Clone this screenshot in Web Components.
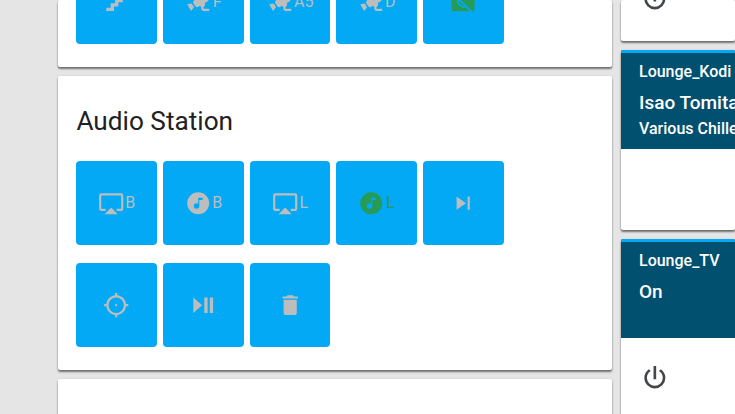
<!doctype html>
<html><head><meta charset="utf-8">
<style>
html,body{margin:0;height:414px;overflow:hidden;background:#e5e5e5;font-family:Roboto,sans-serif}
</style></head><body>
<dash-board>
  <dash-column slot="left">
    <dash-card style="height:67px" align="end">
      <action-row>
        <action-btn icon="stairs"></action-btn>
        <action-btn icon="cctv" label="F"></action-btn>
        <action-btn icon="cctv" label="A5"></action-btn>
        <action-btn icon="cctv" label="D"></action-btn>
        <action-btn icon="videooff" on></action-btn>
      </action-row>
    </dash-card>
    <dash-card heading="Audio Station" style="height:294px">
      <action-row>
        <action-btn icon="airplay" label="B"></action-btn>
        <action-btn icon="music" label="B"></action-btn>
        <action-btn icon="airplay" label="L"></action-btn>
        <action-btn icon="music" label="L" on></action-btn>
        <action-btn icon="next"></action-btn>
      </action-row>
      <action-row>
        <action-btn icon="crosshair"></action-btn>
        <action-btn icon="playpause"></action-btn>
        <action-btn icon="trash"></action-btn>
      </action-row>
    </dash-card>
    <dash-card style="height:60px"></dash-card>
  </dash-column>
  <dash-column slot="right">
    <media-card style="height:41px" bare icon="ring"></media-card>
    <media-card style="height:180px" name="Lounge_Kodi" title="Isao Tomita" sub="Various Chillers"></media-card>
    <media-card style="height:200px" name="Lounge_TV" title="On" icon="power"></media-card>
  </dash-column>
</dash-board>
<script>
const P={
stairs:'M15,5V9H11V13H7V17H3V20H10V16H14V12H18V8H22V5H15Z',
cctv:'M18.15,4.94C17.77,4.91 17.37,5 17,5.2L8.35,10.2C7.39,10.76 7.07,12 7.62,12.94L9.12,15.53C9.67,16.5 10.89,16.82 11.85,16.27L13.65,15.23C13.92,15.69 14.32,16.06 14.81,16.27V18.04C14.81,19.13 15.7,20 16.81,20H22V18.04H16.81V16.27C17.72,15.87 18.31,14.97 18.31,14C18.31,13.54 18.19,13.11 17.97,12.73L20.5,11.27C21.47,10.71 21.8,9.5 21.24,8.53L19.74,5.94C19.4,5.34 18.79,5 18.15,4.94M6.22,13.17L2,13.87L2.75,15.17L4.75,18.63L5.5,19.93L8.22,16.63L6.22,13.17Z',
videooff:'M3.5,0H21A1.5,1.5 0 0,1 22.3,1.5V18.5A1.7,1.7 0 0,1 20.6,20.2H3.2A1.7,1.7 0 0,1 1.5,18.5V1.5Z',
airplay:'M6,22H18L12,16M21,3H3A2,2 0 0,0 1,5V17A2,2 0 0,0 3,19H7V17H3V5H21V17H17V19H21A2,2 0 0,0 23,17V5A2,2 0 0,0 21,3Z',
music:'M16,9V7H12V12.5C11.58,12.19 11.07,12 10.5,12A2.5,2.5 0 0,0 8,14.5A2.5,2.5 0 0,0 10.5,17A2.5,2.5 0 0,0 13,14.5V9H16M12,2A10,10 0 0,1 22,12A10,10 0 0,1 12,22A10,10 0 0,1 2,12A10,10 0 0,1 12,2Z',
next:'M16,18H18V6H16M6,18L14.5,12L6,6V18Z',
crosshair:'M3.05,13H1V11H3.05C3.5,6.83 6.83,3.5 11,3.05V1H13V3.05C17.17,3.5 20.5,6.83 20.95,11H23V13H20.95C20.5,17.17 17.17,20.5 13,20.95V23H11V20.95C6.83,20.5 3.5,17.17 3.05,13M12,5A7,7 0 0,0 5,12A7,7 0 0,0 12,19A7,7 0 0,0 19,12A7,7 0 0,0 12,5ZM12,11A1,1 0 0,1 13,12A1,1 0 0,1 12,13A1,1 0 0,1 11,12A1,1 0 0,1 12,11Z',
playpause:'M3,5V19L11,12M13,19H16V5H13M18,5V19H21V5',
trash:'M19,4H15.5L14.5,3H9.5L8.5,4H5V6H19M6,19A2,2 0 0,0 8,21H16A2,2 0 0,0 18,19V7H6V19Z',
power:'M16.56,5.44L15.11,6.89C16.84,7.94 18,9.83 18,12A6,6 0 0,1 12,18A6,6 0 0,1 6,12C6,9.83 7.16,7.94 8.88,6.88L7.44,5.44C5.36,6.88 4,9.28 4,12A8,8 0 0,0 12,20A8,8 0 0,0 20,12C20,9.28 18.64,6.88 16.56,5.44M13,3H11V13H13',
ring:'M12,4A8,8 0 0,1 20,12A8,8 0 0,1 12,20A8,8 0 0,1 4,12A8,8 0 0,1 12,4M12,6A6,6 0 0,0 6,12A6,6 0 0,0 12,18A6,6 0 0,0 18,12A6,6 0 0,0 12,6M11,6H13V14H11Z'
};
customElements.define('dash-board',class extends HTMLElement{constructor(){super();this.attachShadow({mode:'open'}).innerHTML=`<style>
:host{display:flex;height:414px;overflow:hidden;padding-left:58px;gap:9px;box-sizing:border-box}
::slotted([slot=left]){width:554px;flex:none}
::slotted([slot=right]){flex:1;min-width:0}
</style><slot name="left"></slot><slot name="right"></slot>`}});
customElements.define('dash-column',class extends HTMLElement{constructor(){super();this.attachShadow({mode:'open'}).innerHTML=`<style>
:host{display:flex;flex-direction:column;gap:9px}
</style><slot></slot>`}});
customElements.define('dash-card',class extends HTMLElement{constructor(){super();
const h=this.getAttribute('heading');const end=this.getAttribute('align')==='end';
this.attachShadow({mode:'open'}).innerHTML=`<style>
:host{display:flex;flex:none;flex-direction:column;justify-content:${end?'flex-end':'flex-start'};background:#fff;border-radius:2px;box-shadow:0 2px 2px rgba(0,0,0,.5),0 0 2px rgba(0,0,0,.12);padding:${end?'0 0 23px 18px':'0 0 0 18px'};box-sizing:border-box}
.rows{display:flex;flex-direction:column;gap:18px}
h2{margin:0;padding:29px 0 0 .4px;height:85px;box-sizing:border-box;font:400 26.2px/32px Roboto,sans-serif;color:#212121;flex:none}
</style>${h?`<h2>${h}</h2>`:''}<div class="rows"><slot></slot></div>`}});
customElements.define('action-row',class extends HTMLElement{constructor(){super();this.attachShadow({mode:'open'}).innerHTML=`<style>
:host{display:grid;grid-template-columns:81px 81px 80px 81px 81px;column-gap:6px}
</style><slot></slot>`}});
customElements.define('action-btn',class extends HTMLElement{constructor(){super();
const i=this.getAttribute('icon'),l=this.getAttribute('label')||'',on=this.hasAttribute('on');
const extra=i==='videooff'?'<path d="M3,4.5L21,22" stroke="#03a9f4" stroke-width="1.6" fill="none"/><path d="M7,9C6.5,13 9,16 13.5,16.5" stroke="#03a9f4" stroke-width="1.6" fill="none"/>':'';
this.attachShadow({mode:'open'}).innerHTML=`<style>
:host{display:flex;height:84px;align-items:center;justify-content:center;background:#03a9f4;border-radius:4px;color:${on?'#259b57':'#bdbdbd'};font:400 16px/18px Roboto,sans-serif}
svg{width:26.4px;height:26.4px;flex:none;display:block}
span{margin-left:1px}
</style><svg viewBox="0 0 24 24"><path fill="currentColor" d="${P[i]}"/>${extra}</svg>${l?`<span>${l}</span>`:''}`}});
customElements.define('media-card',class extends HTMLElement{constructor(){super();
const n=this.getAttribute('name'),t=this.getAttribute('title'),s=this.getAttribute('sub'),i=this.getAttribute('icon'),bare=this.hasAttribute('bare');
this.attachShadow({mode:'open'}).innerHTML=`<style>
:host{display:flex;flex:none;flex-direction:column;background:#fff;border-radius:2px;box-shadow:0 2px 2px rgba(0,0,0,.5),0 0 2px rgba(0,0,0,.12);overflow:hidden;font-family:Roboto,sans-serif;box-sizing:border-box;${bare?'justify-content:flex-end;':''}}
header{height:99px;flex:none;box-sizing:border-box;border-top:3px solid #03a9f4;background:#01506f;color:#fff;padding:9px 18px 0;white-space:nowrap;overflow:hidden}
.n{font:500 16px/20px Roboto,sans-serif}
.t{font:500 19px/24px Roboto,sans-serif;margin-top:9px}
.s{font:500 16px/20px Roboto,sans-serif;margin-top:4px}
.ic{display:flex;flex:none;padding:${bare?'0 0 26px 18px':'24px 0 0 18px'}}
svg{width:31.7px;height:31.7px;display:block;color:#44474a}
</style>${n?`<header><div class="n">${n}</div><div class="t">${t}</div>${s?`<div class="s">${s}</div>`:''}</header>`:''}${i?`<div class="ic"><svg viewBox="0 0 24 24"><path fill="currentColor" d="${P[i]}"/></svg></div>`:''}`}});
</script>
</body></html>
